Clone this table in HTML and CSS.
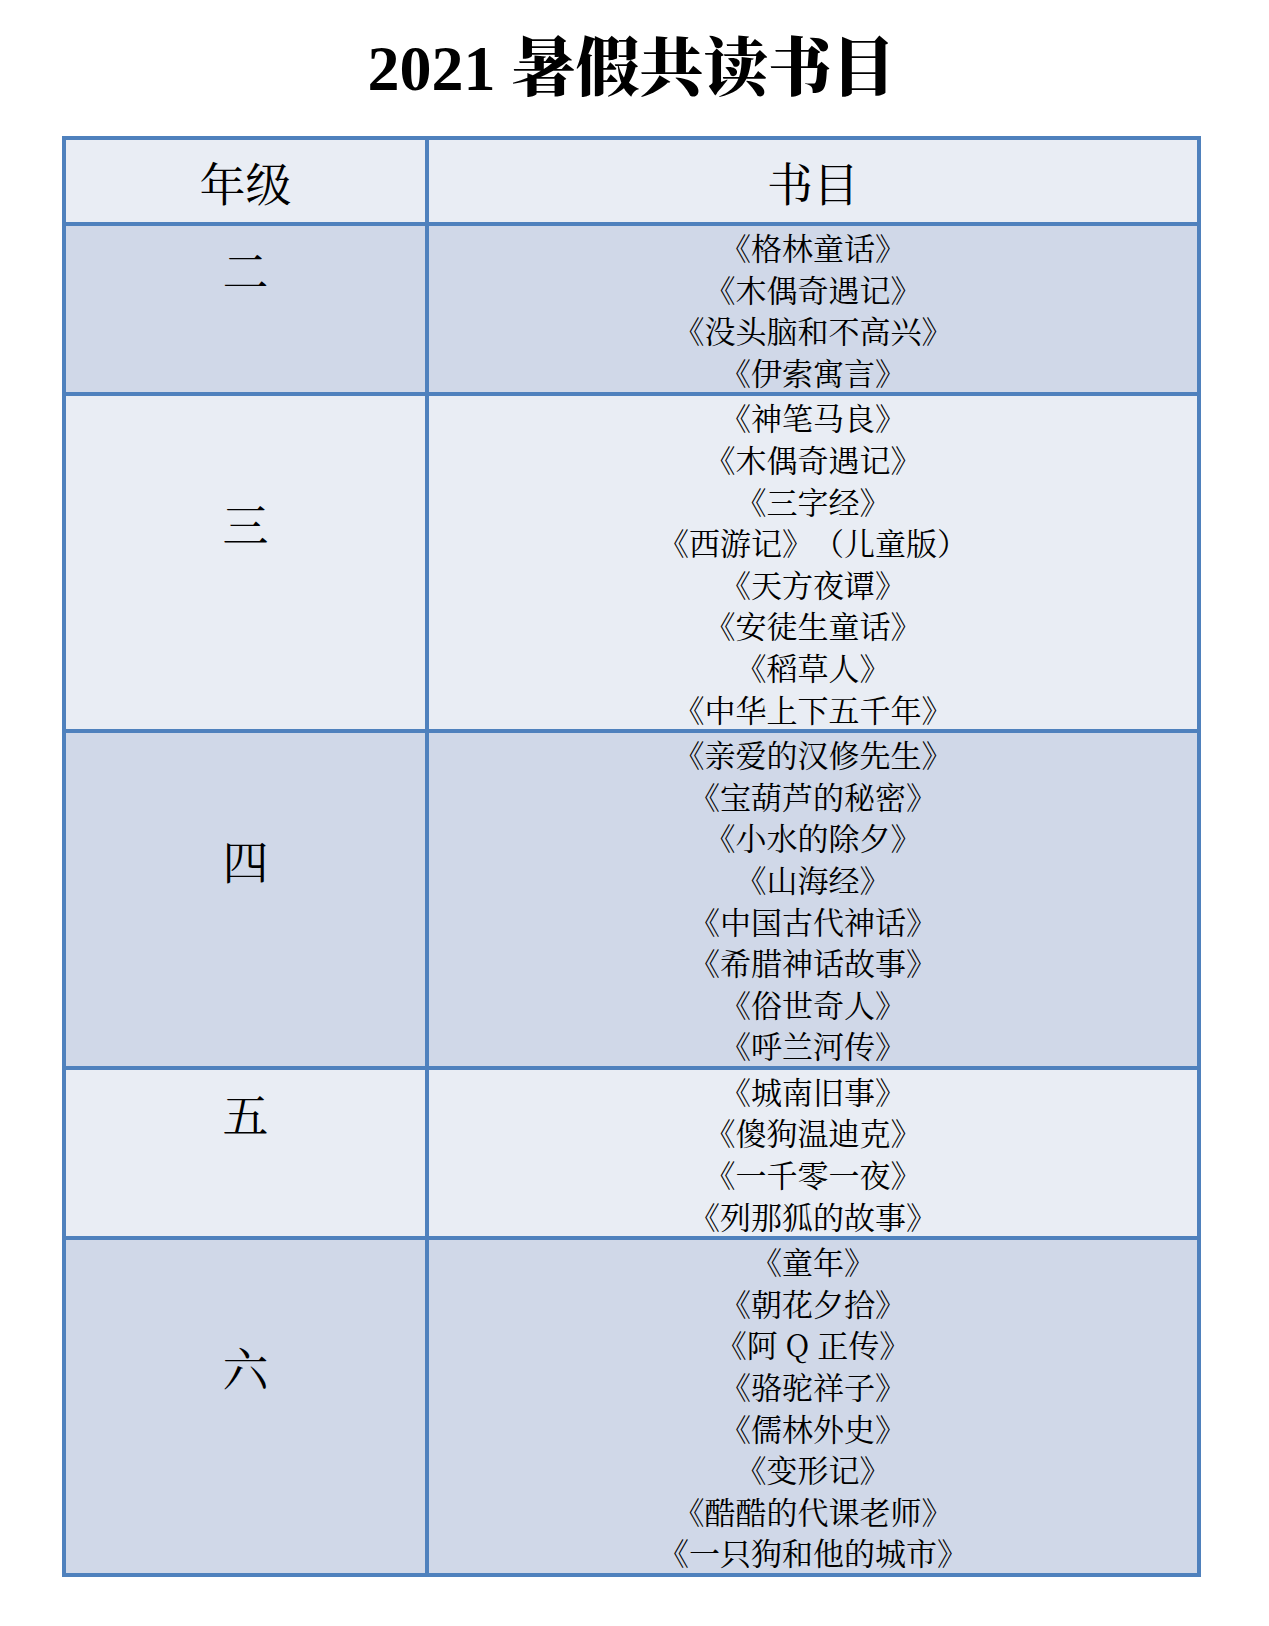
FILE: index.html
```html
<!DOCTYPE html>
<html lang="zh-CN">
<head>
<meta charset="utf-8">
<title>2021 暑假共读书目</title>
<link rel="stylesheet" href="styles.css">
</head>
<body>
<div class="page">
  <h1 class="title">2021 暑假共读书目</h1>
  <table class="books">
    <thead>
      <tr class="head">
        <th class="grade-col">年级</th>
        <th class="list-col">书目</th>
      </tr>
    </thead>
    <tbody>
      <tr class="dark">
        <td class="grade">二</td>
        <td class="list">《格林童话》<br>《木偶奇遇记》<br>《没头脑和不高兴》<br>《伊索寓言》</td>
      </tr>
      <tr class="light">
        <td class="grade">三</td>
        <td class="list">《神笔马良》<br>《木偶奇遇记》<br>《三字经》<br>《西游记》（儿童版）<br>《天方夜谭》<br>《安徒生童话》<br>《稻草人》<br>《中华上下五千年》</td>
      </tr>
      <tr class="dark">
        <td class="grade">四</td>
        <td class="list">《亲爱的汉修先生》<br>《宝葫芦的秘密》<br>《小水的除夕》<br>《山海经》<br>《中国古代神话》<br>《希腊神话故事》<br>《俗世奇人》<br>《呼兰河传》</td>
      </tr>
      <tr class="light">
        <td class="grade">五</td>
        <td class="list">《城南旧事》<br>《傻狗温迪克》<br>《一千零一夜》<br>《列那狐的故事》</td>
      </tr>
      <tr class="dark">
        <td class="grade">六</td>
        <td class="list">《童年》<br>《朝花夕拾》<br>《阿 Q 正传》<br>《骆驼祥子》<br>《儒林外史》<br>《变形记》<br>《酷酷的代课老师》<br>《一只狗和他的城市》</td>
      </tr>
    </tbody>
  </table>
</div>
</body>
</html>
```

FILE: styles.css
```css
html, body {
  margin: 0;
  padding: 0;
  background: #ffffff;
}

.page {
  padding: 31px 0 40px 62px;
  font-family: "Noto Serif CJK SC", "Liberation Serif", "Noto Sans CJK SC", serif;
  color: #000000;
  text-spacing-trim: space-all;
}

.title {
  margin: 0 0 29px 0;
  width: 1139px;
  text-align: center;
  font-family: "Liberation Serif", "Noto Serif CJK SC", "Noto Sans CJK SC", serif;
  font-size: 64px;
  font-weight: 900;
  line-height: 76px;
}

.books {
  width: 1139px;
  border-collapse: separate;
  border-spacing: 0;
  border: 4px solid #4f81bd;
  table-layout: fixed;
}

.grade-col {
  width: 359px;
}

.books th,
.books td {
  padding: 0;
  text-align: center;
  font-weight: normal;
}

.books th.grade-col,
.books td.grade {
  border-right: 4px solid #4f81bd;
}

.books tbody td {
  border-top: 4px solid #4f81bd;
}

.head th {
  height: 82px;
  background: #e9edf4;
  font-size: 46px;
  line-height: 56px;
  vertical-align: middle;
}

.dark td {
  background: #d0d8e8;
}

.light td {
  background: #e9edf4;
}

.grade {
  font-size: 46px;
  line-height: 56px;
  vertical-align: middle;
  padding-bottom: 82px !important;
}

.list {
  font-size: 31px;
  line-height: 41.6px;
  vertical-align: top;
}
```
